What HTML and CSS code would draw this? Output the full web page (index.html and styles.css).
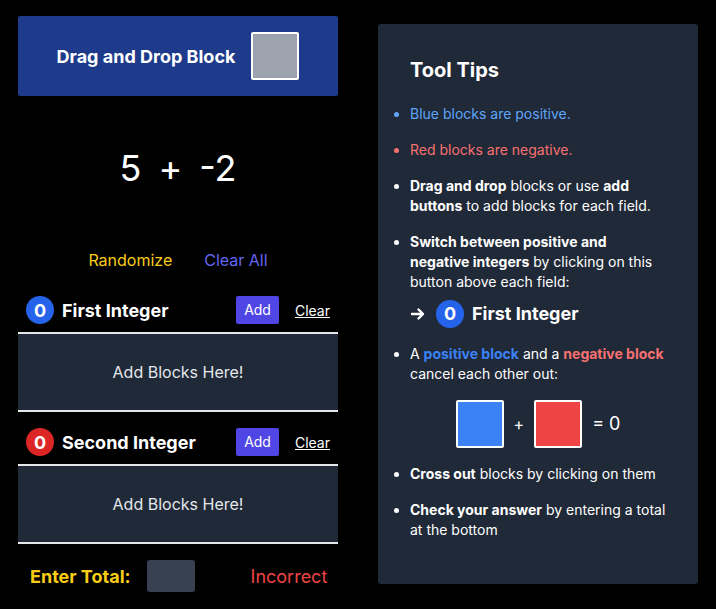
FILE: index.html
```html
<!DOCTYPE html>
<html>
<head>
<meta charset="utf-8">
<link rel="stylesheet" href="styles.css">
</head>
<body>
<div class="app">
  <div class="left">
    <div class="drag-header">
      <span class="drag-title">Drag and Drop Block</span>
      <div class="drag-block"></div>
    </div>
    <div class="equation"><span>5</span><span>+</span><span>-2</span></div>
    <div class="actions">
      <span class="randomize">Randomize</span>
      <span class="clear-all">Clear All</span>
    </div>
    <div class="int-row">
      <span class="sign sign-pos">0</span>
      <span class="int-label">First Integer</span>
      <span class="add-btn">Add</span>
      <span class="clear-link">Clear</span>
    </div>
    <div class="drop-zone">Add Blocks Here!</div>
    <div class="int-row second">
      <span class="sign sign-neg">0</span>
      <span class="int-label">Second Integer</span>
      <span class="add-btn">Add</span>
      <span class="clear-link">Clear</span>
    </div>
    <div class="drop-zone">Add Blocks Here!</div>
    <div class="total-row">
      <span class="total-label">Enter Total:</span>
      <div class="total-input"></div>
      <span class="result">Incorrect</span>
    </div>
  </div>
  <div class="tips">
    <h2 class="tips-title">Tool Tips</h2>
    <ul class="tips-list">
      <li class="tip-blue">Blue blocks are positive.</li>
      <li class="tip-red">Red blocks are negative.</li>
      <li><b>Drag and drop</b> blocks or use <b>add buttons</b> to add blocks for each field.</li>
      <li><b>Switch between positive and negative integers</b> by clicking on this button above each field:
        <div class="demo-row">
          <svg class="arrow" width="16" height="16" viewBox="0 0 16 16"><path d="M2 8 H13 M8.5 3.5 L13 8 L8.5 12.5" fill="none" stroke="#fff" stroke-width="2.4" stroke-linecap="round" stroke-linejoin="round"/></svg>
          <span class="sign sign-pos">0</span>
          <span class="int-label">First Integer</span>
        </div>
      </li>
      <li>A <b class="txt-blue">positive block</b> and a <b class="txt-red">negative block</b> cancel each other out:
        <div class="cancel-row">
          <div class="sq sq-blue"></div>
          <span class="plus">+</span>
          <div class="sq sq-red"></div>
          <span class="equals">= 0</span>
        </div>
      </li>
      <li><b>Cross out</b> blocks by clicking on them</li>
      <li><b>Check your answer</b> by entering a total at the bottom</li>
    </ul>
  </div>
</div>
</body>
</html>
```

FILE: styles.css
```css
* { box-sizing: border-box; }
html, body {
  margin: 0;
  padding: 0;
  background: #000;
  font-family: Inter, "Noto Sans", sans-serif;
  color: #fff;
}
.app {
  display: flex;
  align-items: flex-start;
  gap: 40px;
  padding: 16px 18px;
}
.left {
  width: 320px;
  display: flex;
  flex-direction: column;
}
.drag-header {
  height: 80px;
  background: #1e3a8a;
  border-radius: 2px;
  display: flex;
  align-items: center;
  justify-content: center;
  gap: 16px;
}
.drag-title {
  font-size: 18px;
  font-weight: 700;
}
.drag-block {
  width: 48px;
  height: 48px;
  background: #9ca3af;
  border: 2px solid #fff;
  border-radius: 2px;
}
.equation {
  margin-top: 52px;
  height: 40px;
  line-height: 40px;
  font-size: 36px;
  display: flex;
  justify-content: center;
  gap: 17px;
}
.actions {
  margin-top: 60px;
  height: 24px;
  line-height: 24px;
  font-size: 16px;
  display: flex;
  justify-content: center;
  gap: 32px;
}
.randomize { color: #facc15; }
.clear-all { color: #6366f1; }
.int-row {
  margin-top: 24px;
  height: 28px;
  display: flex;
  align-items: center;
  padding: 0 8px;
}
.int-row.second { margin-top: 16px; }
.sign {
  width: 28px;
  height: 28px;
  border-radius: 50%;
  display: flex;
  align-items: center;
  justify-content: center;
  font-weight: 700;
  font-size: 18px;
}
.sign-pos { background: #2563eb; }
.sign-neg { background: #dc2626; }
.int-label {
  margin-left: 8px;
  font-size: 18px;
  font-weight: 700;
  flex: 1;
}
.add-btn {
  background: #4f46e5;
  height: 28px;
  line-height: 28px;
  padding: 0 8px;
  font-size: 14px;
  border-radius: 2px;
}
.clear-link {
  margin-left: 16px;
  font-size: 14px;
  text-decoration: underline;
}
.drop-zone {
  margin-top: 8px;
  height: 80px;
  background: #1f2937;
  border-top: 2px solid #e5e7eb;
  border-bottom: 2px solid #e5e7eb;
  display: flex;
  align-items: center;
  justify-content: center;
  font-size: 16px;
  color: #e5e7eb;
}
.total-row {
  margin-top: 16px;
  height: 32px;
  display: flex;
  align-items: center;
  padding-left: 12px;
}
.total-label {
  color: #facc15;
  font-size: 18px;
  font-weight: 700;
}
.total-input {
  margin-left: 16px;
  width: 48px;
  height: 32px;
  background: #374151;
  border-radius: 3px;
}
.result {
  margin-left: 56px;
  color: #ef4444;
  font-size: 18px;
}
.tips {
  margin-top: 8px;
  width: 320px;
  height: 560px;
  background: #1f2937;
  border-radius: 3px;
  padding: 32px;
}
.tips-title {
  margin: 0;
  font-size: 20px;
  line-height: 28px;
  font-weight: 700;
}
.tips-list {
  margin: 20px 0 0 0;
  padding: 0;
  list-style: disc outside;
  font-size: 14px;
  line-height: 20px;
}
.tips-list li + li { margin-top: 16px; }
.tips-list b { font-weight: 700; }
.tip-blue { color: #60a5fa; }
.tip-red { color: #f87171; }
.txt-blue { color: #3b82f6; }
.txt-red { color: #f87171; }
.demo-row {
  margin-top: 8px;
  display: flex;
  align-items: center;
  height: 28px;
}
.demo-row .sign { margin-left: 10px; }
.demo-row .int-label { flex: none; }
.cancel-row {
  margin-top: 16px;
  display: flex;
  align-items: center;
  justify-content: center;
  gap: 10px;
  height: 48px;
}
.sq {
  width: 48px;
  height: 48px;
  border: 2px solid #fff;
  border-radius: 2px;
}
.sq-blue { background: #3b82f6; }
.sq-red { background: #ef4444; }
.plus { font-size: 16px; }
.equals { font-size: 18px; }
```
